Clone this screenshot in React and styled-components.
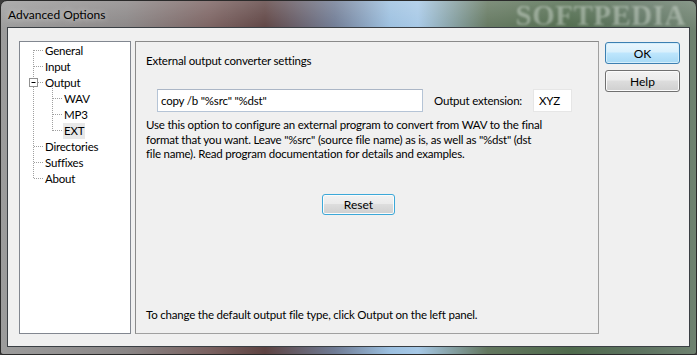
import React from 'react';
import styled, { createGlobalStyle } from 'styled-components';

const GlobalStyle = createGlobalStyle`
  html, body {
    margin: 0;
    padding: 0;
    background: #3b3b3b;
  }
  body {
    font-family: "Segoe UI", Lato, "Liberation Sans", sans-serif;
    font-size: 12px;
    color: #000;
  }
`;

const Window = styled.div`
  box-sizing: border-box;
  width: 697px;
  height: 355px;
  border: 1px solid #2a2a2a;
  border-radius: 7px 7px 3px 3px;
  padding: 0 6px 7px 6px;
  display: flex;
  flex-direction: column;
  overflow: hidden;
  background:
    linear-gradient(180deg, rgba(255,255,255,0.18) 0%, rgba(255,255,255,0) 30px),
    linear-gradient(90deg,
      #9c9c9c 0%, #8a8686 18%, #7a6160 30%, #5e4342 38%,
      #6f7b94 48%, #9cc0e0 56%, #a6c8e6 60%, #63775f 70%,
      #4f6a4c 82%, #5d7360 92%, #6f8270 100%);
`;

const TitleBar = styled.div`
  height: 26px;
  display: flex;
  align-items: center;
  justify-content: space-between;
  padding: 0 4px 0 1px;
`;

const Title = styled.span`
  font-size: 12px;
  color: #000;
  text-shadow: 0 0 6px rgba(255,255,255,0.7);
`;

const Watermark = styled.span`
  font-family: "Liberation Serif", serif;
  font-weight: bold;
  font-size: 29px;
  letter-spacing: 0.5px;
  color: rgba(205, 215, 205, 0.5);
  filter: blur(1.3px);
  margin-top: 3px;
`;

const Client = styled.div`
  flex: 1;
  box-sizing: border-box;
  border: 1px solid #3a3f44;
  background: #f0f0f0;
  display: flex;
  align-items: flex-start;
  padding: 13px 0 0 11px;
  font-size: 11.5px;
  letter-spacing: -0.2px;
`;

const TreePanel = styled.div`
  box-sizing: border-box;
  position: relative;
  width: 112px;
  height: 293px;
  background: #fff;
  border: 1px solid #828790;
`;

const TreeLines = styled.svg`
  position: absolute;
  left: 0;
  top: 0;
`;

const TreeList = styled.ul`
  list-style: none;
  margin: 0;
  padding: 1px 0 0 0;
`;

const TreeItem = styled.li`
  height: 16px;
  line-height: 16px;
  padding-left: ${p => (p.$child ? 43 : 24)}px;
  white-space: nowrap;
`;

const ItemLabel = styled.span`
  display: inline-block;
  padding: 0 1px;
  background: ${p => (p.$selected ? '#e8e8e8' : 'transparent')};
`;

const SettingsPanel = styled.div`
  box-sizing: border-box;
  width: 464px;
  height: 293px;
  margin-left: 4px;
  border: 1px solid #8a8a8a;
  border-right-color: #a0a0a0;
  border-bottom-color: #a0a0a0;
  padding: 11px 10px 0 10px;
  display: flex;
  flex-direction: column;
`;

const Heading = styled.div`
  line-height: 16px;
`;

const CommandRow = styled.div`
  display: flex;
  align-items: center;
  margin: 20px 0 0 11px;
`;

const TextBox = styled.div`
  box-sizing: border-box;
  width: ${p => p.$width}px;
  height: 23px;
  background: #fff;
  border: 1px solid ${p => (p.$plain ? '#e6e6e6' : '#b5c4d6')};
  border-top-color: ${p => (p.$plain ? '#e6e6e6' : '#abb6c6')};
  padding: 0 0 0 ${p => p.$indent}px;
  line-height: 21px;
  white-space: nowrap;
`;

const FieldLabel = styled.span`
  margin: 0 11px 0 11px;
`;

const Description = styled.p`
  margin: 6px 0 0 0;
  width: 440px;
  line-height: 14.5px;
`;

const ResetRow = styled.div`
  margin: 32px 0 0 176px;
`;

const Button = styled.button`
  box-sizing: border-box;
  width: ${p => p.$width}px;
  height: ${p => p.$height}px;
  padding: 0;
  font-family: inherit;
  font-size: 12px;
  letter-spacing: 0;
  color: #000;
  border-radius: 3px;
  border: 1px solid ${p => (p.$default ? '#3c7fb1' : p.$focus ? '#3ca8d8' : '#707070')};
  box-shadow: inset 0 0 0 1px ${p => (p.$default ? '#d4eefb' : '#fbfbfb')};
  background: ${p =>
    p.$default
      ? 'linear-gradient(180deg, #eaf6fd 0%, #d9f0fc 45%, #bee6fd 50%, #a7d9f5 100%)'
      : 'linear-gradient(180deg, #f2f2f2 0%, #ebebeb 45%, #dddddd 50%, #cfcfcf 100%)'};
`;

const Footer = styled.div`
  margin-top: auto;
  margin-bottom: 10px;
  line-height: 16px;
`;

const ButtonColumn = styled.div`
  display: flex;
  flex-direction: column;
  gap: 6px;
  margin: 1px 0 0 6px;
`;

const tree = [
  { label: 'General' },
  { label: 'Input' },
  { label: 'Output' },
  { label: 'WAV', child: true },
  { label: 'MP3', child: true },
  { label: 'EXT', child: true, selected: true },
  { label: 'Directories' },
  { label: 'Suffixes' },
  { label: 'About' },
];

function Connectors() {
  const dot = { stroke: '#a0a0a0', strokeWidth: 1, strokeDasharray: '1 1' };
  const rows = tree.map((t, i) => ({ ...t, y: 8.5 + i * 16 }));
  return (
    <TreeLines width="110" height="150">
      <line x1="13.5" y1="8" x2="13.5" y2="36" {...dot} />
      <line x1="13.5" y1="45" x2="13.5" y2="137" {...dot} />
      <line x1="32.5" y1="44" x2="32.5" y2="89" {...dot} />
      {rows.map(r =>
        r.child ? (
          <line key={r.label} x1="33" y1={r.y} x2="43" y2={r.y} {...dot} />
        ) : r.label === 'Output' ? (
          <line key={r.label} x1="18" y1={r.y} x2="24" y2={r.y} {...dot} />
        ) : (
          <line key={r.label} x1="14" y1={r.y} x2="24" y2={r.y} {...dot} />
        )
      )}
      <rect x="9.5" y="36.5" width="8" height="8" fill="#fff" stroke="#919191" />
      <line x1="11.5" y1="40.5" x2="15.5" y2="40.5" stroke="#000" />
    </TreeLines>
  );
}

export default function App() {
  return (
    <>
      <GlobalStyle />
      <Window>
        <TitleBar>
          <Title>Advanced Options</Title>
          <Watermark>SOFTPEDIA</Watermark>
        </TitleBar>
        <Client>
          <TreePanel>
            <Connectors />
            <TreeList>
              {tree.map(t => (
                <TreeItem key={t.label} $child={t.child}>
                  <ItemLabel $selected={t.selected}>{t.label}</ItemLabel>
                </TreeItem>
              ))}
            </TreeList>
          </TreePanel>
          <SettingsPanel>
            <Heading>External output converter settings</Heading>
            <CommandRow>
              <TextBox $width={266} $indent={3}>copy /b "%src" "%dst"</TextBox>
              <FieldLabel>Output extension:</FieldLabel>
              <TextBox $width={39} $indent={5} $plain>XYZ</TextBox>
            </CommandRow>
            <Description>
              Use this option to configure an external program to convert from WAV to the final
              <br />
              format that you want. Leave "%src" (source file name) as is, as well as "%dst" (dst
              <br />
              file name). Read program documentation for details and examples.
            </Description>
            <ResetRow>
              <Button $width={73} $height={21} $focus>Reset</Button>
            </ResetRow>
            <Footer>To change the default output file type, click Output on the left panel.</Footer>
          </SettingsPanel>
          <ButtonColumn>
            <Button $width={75} $height={22} $default>OK</Button>
            <Button $width={75} $height={22}>Help</Button>
          </ButtonColumn>
        </Client>
      </Window>
    </>
  );
}
